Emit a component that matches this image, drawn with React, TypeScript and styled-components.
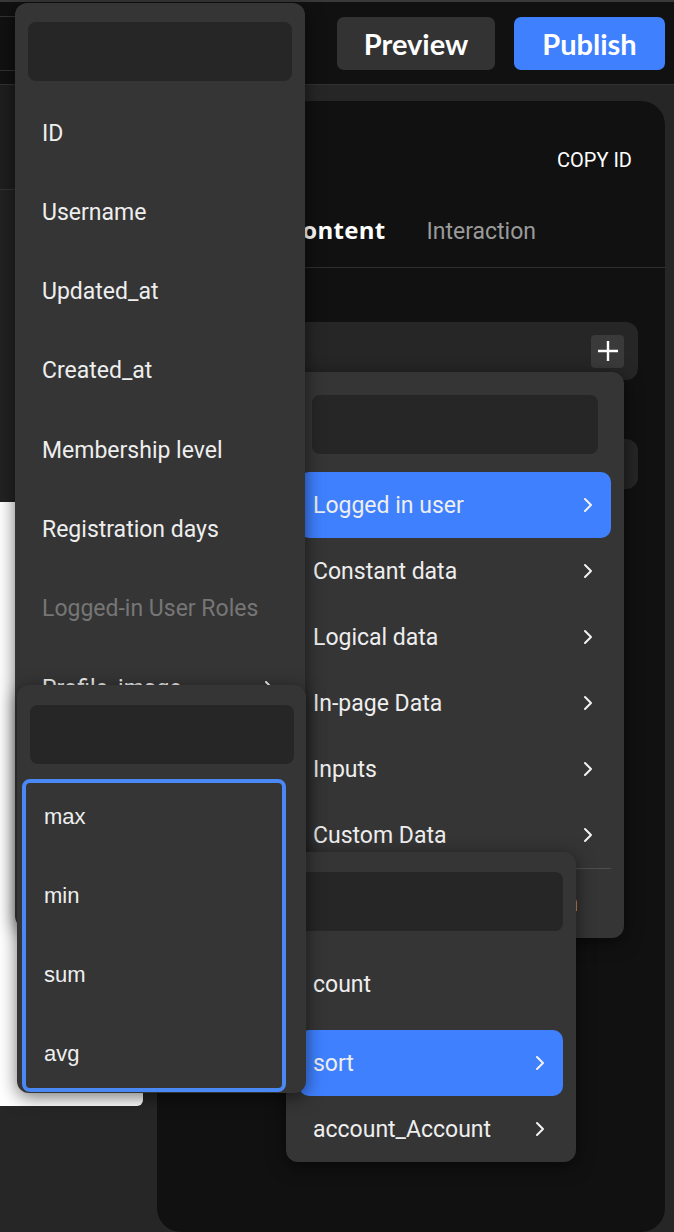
import React from "react";
import styled, { createGlobalStyle } from "styled-components";

const GlobalStyle = createGlobalStyle`
  html, body { margin: 0; padding: 0; background: #262626; }
  body { font-family: Roboto, "Noto Sans", sans-serif; }
  * { box-sizing: border-box; }
`;

const Page = styled.div`
  position: relative;
  width: 674px;
  height: 1232px;
  overflow: hidden;
  background: #262626;
  display: flex;
  flex-direction: column;
`;

const Header = styled.header`
  flex: none;
  height: 85px;
  background: #111;
  border-top: 2px solid #393939;
  border-bottom: 1px solid #333;
  display: flex;
  align-items: center;
  padding-right: 9px;
  gap: 19px;
`;

const HeaderField = styled.div`
  width: 290px;
  height: 55px;
  border-top: 1px solid #333;
  border-bottom: 1px solid #333;
  margin-right: auto;
`;

const HeadButton = styled.button<{ $primary?: boolean }>`
  height: 53px;
  width: ${(p) => (p.$primary ? "151px" : "158px")};
  border: none;
  border-radius: 7px;
  background: ${(p) => (p.$primary ? "#3f80ff" : "#333")};
  color: #fff;
  font-family: Lato, "Noto Sans", sans-serif;
  font-weight: 700;
  font-size: 29px;
  padding: 0;
`;

const Body = styled.div`
  flex: 1;
  display: flex;
`;

const LeftRail = styled.div`
  width: 157px;
  flex: none;
  display: flex;
  flex-direction: column;
`;

const RailTop = styled.div`
  height: 105px;
  background: #1e1e1e;
  border-bottom: 1px solid #333;
`;

const RailMid = styled.div`
  height: 312px;
  background: #222;
`;

const WhiteCard = styled.div`
  width: 143px;
  height: 604px;
  background: #fff;
  border-radius: 0 0 6px 0;
`;

const Panel = styled.section`
  margin-top: 16px;
  width: 508px;
  height: 1131px;
  background: #111;
  border-radius: 24px;
  display: flex;
  flex-direction: column;
`;

const PanelTop = styled.div`
  height: 100px;
  display: flex;
  align-items: center;
  justify-content: flex-end;
  padding: 18px 33px 0 0;
`;

const CopyId = styled.span`
  color: #fff;
  font-size: 20px;
`;

const Tabs = styled.div`
  height: 67px;
  display: flex;
  align-items: baseline;
  justify-content: flex-end;
  gap: 41px;
  padding: 15px 129px 0 0;
  border-bottom: 1px solid #2f2f2f;
`;

const Tab = styled.span<{ $active?: boolean }>`
  font-size: ${(p) => (p.$active ? "24px" : "23px")};
  line-height: 28px;
  font-family: ${(p) => (p.$active ? `"Open Sans", Roboto, sans-serif` : `Roboto, sans-serif`)};
  font-weight: ${(p) => (p.$active ? 700 : 400)};
  letter-spacing: ${(p) => (p.$active ? "0.3px" : "0")};
  color: ${(p) => (p.$active ? "#fff" : "#9a9a9a")};
`;

const Bars = styled.div`
  display: flex;
  flex-direction: column;
  gap: 59px;
  padding: 54px 27px 0 28px;
`;

const Bar = styled.div<{ $h: number }>`
  height: ${(p) => p.$h}px;
  background: #262626;
  border-radius: 12px;
  display: flex;
  align-items: center;
  justify-content: flex-end;
  padding-right: 14px;
`;

const PlusButton = styled.div`
  width: 33px;
  height: 33px;
  border-radius: 4px;
  background: #3a3a3a;
  display: flex;
  align-items: center;
  justify-content: center;
`;

/* ---------- floating menus ---------- */

const Menu = styled.div<{ $x: number; $y: number; $w: number; $h: number; $z: number }>`
  position: absolute;
  left: ${(p) => p.$x}px;
  top: ${(p) => p.$y}px;
  width: ${(p) => p.$w}px;
  height: ${(p) => p.$h}px;
  z-index: ${(p) => p.$z};
  background: #353535;
  border-radius: 12px;
  box-shadow: 0 4px 18px rgba(0, 0, 0, 0.55);
  overflow: hidden;
  display: flex;
  flex-direction: column;
`;

const Search = styled.div<{ $ml: number; $w: number; $mt: number }>`
  flex: none;
  margin: ${(p) => p.$mt}px 0 0 ${(p) => p.$ml}px;
  width: ${(p) => p.$w}px;
  height: 59px;
  background: #262626;
  border-radius: 8px;
`;

const ItemList = styled.div<{ $gap: number; $mt: number; $px: number }>`
  display: flex;
  flex-direction: column;
  gap: ${(p) => p.$gap}px;
  margin-top: ${(p) => p.$mt}px;
  padding: 0 ${(p) => p.$px}px;
`;

const Item = styled.div<{ $active?: boolean; $dim?: boolean; $mt?: number }>`
  flex: none;
  height: 66px;
  margin-top: ${(p) => p.$mt ?? 0}px;
  display: flex;
  align-items: center;
  justify-content: space-between;
  padding: 0 18px 0 14px;
  border-radius: 10px;
  font-size: 23px;
  color: ${(p) => (p.$dim ? "#767676" : "#eee")};
  background: ${(p) => (p.$active ? "#3f80ff" : "transparent")};
  white-space: nowrap;
`;

const Divider = styled.div`
  margin: 0 13px;
  height: 1px;
  background: #4e4e4e;
`;

const Footer = styled.div`
  height: 70px;
  display: flex;
  align-items: center;
  justify-content: flex-end;
  padding-right: 46px;
  font-size: 23px;
  color: #eee;
`;

const FocusList = styled.div`
  margin: 15px 0 0 5px;
  width: 264px;
  height: 313px;
  border: 4px solid #4a88f5;
  border-radius: 8px;
  padding-top: 1px;
  display: flex;
  flex-direction: column;
  gap: 13px;
`;

const AggItem = styled.div`
  height: 66px;
  display: flex;
  align-items: center;
  padding-left: 18px;
  font-family: "Liberation Sans", Arial, sans-serif;
  font-size: 22px;
  color: #eee;
`;

const Chevron = () => (
  <svg width="10" height="16" viewBox="0 0 10 16" fill="none">
    <path d="M2 2 L8 8 L2 14" stroke="#f2f2f2" strokeWidth="2" strokeLinecap="round" strokeLinejoin="round" />
  </svg>
);

const Plus = () => (
  <svg width="22" height="22" viewBox="0 0 22 22">
    <path d="M11 1 V21 M1 11 H21" stroke="#fff" strokeWidth="2.4" />
  </svg>
);

const userFields: { label: string; dim?: boolean; more?: boolean }[] = [
  { label: "ID" },
  { label: "Username" },
  { label: "Updated_at" },
  { label: "Created_at" },
  { label: "Membership level" },
  { label: "Registration days" },
  { label: "Logged-in User Roles", dim: true },
  { label: "Profile_image", more: true },
  { label: "Email" },
  { label: "Phone" },
];

const sources = ["Logged in user", "Constant data", "Logical data", "In-page Data", "Inputs", "Custom Data"];

export default function App() {
  return (
    <>
      <GlobalStyle />
      <Page>
        <Header>
          <HeaderField />
          <HeadButton>Preview</HeadButton>
          <HeadButton $primary>Publish</HeadButton>
        </Header>
        <Body>
          <LeftRail>
            <RailTop />
            <RailMid />
            <WhiteCard />
          </LeftRail>
          <Panel>
            <PanelTop>
              <CopyId>COPY ID</CopyId>
            </PanelTop>
            <Tabs>
              <Tab>Style</Tab>
              <Tab $active>Content</Tab>
              <Tab>Interaction</Tab>
            </Tabs>
            <Bars>
              <Bar $h={58}>
                <PlusButton>
                  <Plus />
                </PlusButton>
              </Bar>
              <Bar $h={50} />
            </Bars>
          </Panel>
        </Body>

        <Menu $x={286} $y={372} $w={338} $h={566} $z={1}>
          <Search $mt={23} $ml={26} $w={286} />
          <ItemList $gap={0} $mt={18} $px={13}>
            {sources.map((s, i) => (
              <Item key={s} $active={i === 0}>
                {s}
                <Chevron />
              </Item>
            ))}
          </ItemList>
          <Divider />
          <Footer>Clear selection</Footer>
        </Menu>

        <Menu $x={15} $y={3} $w={290} $h={925} $z={2}>
          <Search $mt={19} $ml={13} $w={264} />
          <ItemList $gap={13.3} $mt={19} $px={13}>
            {userFields.map((f) => (
              <Item key={f.label} $dim={f.dim}>
                {f.label}
                {f.more && <Chevron />}
              </Item>
            ))}
          </ItemList>
        </Menu>

        <Menu $x={286} $y={852} $w={290} $h={310} $z={3}>
          <Search $mt={20} $ml={13} $w={264} />
          <ItemList $gap={0} $mt={20} $px={13}>
            <Item>count</Item>
            <Item $active $mt={13}>
              sort
              <Chevron />
            </Item>
            <Item>
              account_Account
              <Chevron />
            </Item>
          </ItemList>
        </Menu>

        <Menu $x={17} $y={685} $w={289} $h={408} $z={4}>
          <Search $mt={20} $ml={13} $w={264} />
          <FocusList>
            <AggItem>max</AggItem>
            <AggItem>min</AggItem>
            <AggItem>sum</AggItem>
            <AggItem>avg</AggItem>
          </FocusList>
        </Menu>
      </Page>
    </>
  );
}
